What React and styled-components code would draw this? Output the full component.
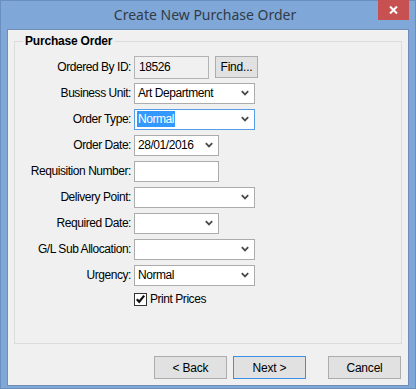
import { Fragment } from 'react';
import styled, { createGlobalStyle } from 'styled-components';

const GlobalStyle = createGlobalStyle`
  html, body { margin: 0; padding: 0; background: #ffffff; }
  * { box-sizing: border-box; }
`

const fields = [
    { label: 'Business Unit:', kind: 'combo', value: 'Art Department', wide: true },
    { label: 'Order Type:', kind: 'combo', value: 'Normal', wide: true, focused: true },
    { label: 'Order Date:', kind: 'combo', value: '28/01/2016' },
    { label: 'Requisition Number:', kind: 'text', value: '' },
    { label: 'Delivery Point:', kind: 'combo', value: '', wide: true },
    { label: 'Required Date:', kind: 'combo', value: '' },
    { label: 'G/L Sub Allocation:', kind: 'combo', value: '', wide: true },
    { label: 'Urgency:', kind: 'combo', value: 'Normal', wide: true },
]

function Chevron() {
    return (
        <ChevronIcon width="8" height="6" viewBox="0 0 8 6">
            <path d="M0.8 1.2 L4 4.4 L7.2 1.2" fill="none" stroke="#4a4a4a" strokeWidth="1.8" />
        </ChevronIcon>
    )
}

function Combo({ value, wide, focused }) {
    return (
        <ComboBox $wide={wide} $focused={focused}>
            <ComboText $selected={focused}>{value}</ComboText>
            <Chevron />
        </ComboBox>
    )
}

export default function App() {
    return (
        <>
            <GlobalStyle />
            <Window>
                <TitleBar>
                    <span />
                    <Title>Create New Purchase Order</Title>
                    <CloseButton type="button">
                        <svg width="9" height="8" viewBox="0 0 9 8">
                            <path d="M1 0.5 L8 7.5 M8 0.5 L1 7.5" stroke="#ffffff" strokeWidth="2" />
                        </svg>
                    </CloseButton>
                </TitleBar>
                <Client>
                    <GroupBox>
                        <Legend>Purchase Order</Legend>
                        <Form>
                            <Label>Ordered By ID:</Label>
                            <IdRow>
                                <ReadOnlyField>18526</ReadOnlyField>
                                <Button type="button" $small>Find...</Button>
                            </IdRow>
                            {fields.map(f => (
                                <Fragment key={f.label}>
                                    <Label>{f.label}</Label>
                                    {f.kind === 'combo'
                                        ? <Combo value={f.value} wide={f.wide} focused={f.focused} />
                                        : <TextField />}
                                </Fragment>
                            ))}
                            <span />
                            <CheckRow>
                                <CheckBox>
                                    <svg width="11" height="11" viewBox="0 0 11 11">
                                        <path d="M1.8 5.2 L4.2 7.8 L9.2 1.6" fill="none" stroke="#111111" strokeWidth="2.2" />
                                    </svg>
                                </CheckBox>
                                Print Prices
                            </CheckRow>
                        </Form>
                    </GroupBox>
                    <ButtonBar>
                        <Button type="button">&lt; Back</Button>
                        <Button type="button" $default>Next &gt;</Button>
                        <Button type="button" $apart>Cancel</Button>
                    </ButtonBar>
                </Client>
            </Window>
        </>
    );
}

const Window = styled.div`
  width: 416px;
  height: 389px;
  display: flex;
  flex-direction: column;
  background: #7fa7d8;
  border: 1px solid #6b8fbc;
  font-family: 'Liberation Sans', Arial, sans-serif;
  font-size: 12px;
  letter-spacing: -0.45px;
  color: #000000;
`
const TitleBar = styled.div`
  height: 29px;
  display: grid;
  grid-template-columns: 1fr auto 1fr;
  align-items: start;
  padding-right: 6px;
`
const Title = styled.div`
  font-family: 'Noto Sans', 'Open Sans', sans-serif;
  font-size: 14px;
  letter-spacing: 0;
  line-height: 28px;
  color: #333b46;
`
const CloseButton = styled.button`
  justify-self: end;
  width: 31px;
  height: 20px;
  margin-top: -1px;
  border: none;
  padding: 0;
  background: #c75050;
  display: flex;
  align-items: center;
  justify-content: center;
`
const Client = styled.div`
  flex: 1;
  margin: 0 6px 6px 6px;
  background: #f0f0f0;
  border: 1px solid #6f8fba;
  display: flex;
  flex-direction: column;
  padding: 0 6px 6px 6px;
`
const GroupBox = styled.fieldset`
  margin: 4px 0 0 0;
  padding: 0 0 29px 0;
  border: 1px solid #dcdcdc;
  min-width: 0;
`
const Legend = styled.legend`
  margin-left: 8px;
  padding: 0 2px;
  font-weight: bold;
  font-size: 12px;
  letter-spacing: -0.2px;
  line-height: 14px;
`
const Form = styled.div`
  display: grid;
  grid-template-columns: 116px 1fr;
  grid-auto-rows: 26px;
  column-gap: 3px;
  align-items: center;
  padding-top: 6px;
`
const Label = styled.div`
  text-align: right;
  white-space: nowrap;
`
const IdRow = styled.div`
  display: flex;
  align-items: center;
  gap: 6px;
`
const ReadOnlyField = styled.div`
  width: 75px;
  height: 23px;
  border: 1px solid #b4b4b4;
  background: #f0f0f0;
  display: flex;
  align-items: center;
  padding-left: 4px;
`
const TextField = styled.div`
  width: 85px;
  height: 21px;
  border: 1px solid #acacac;
  background: #ffffff;
`
const ComboBox = styled.div`
  width: ${p => (p.$wide ? '121px' : '85px')};
  height: 21px;
  border: 1px solid ${p => (p.$focused ? '#569de5' : '#acacac')};
  background: #ffffff;
  display: flex;
  align-items: center;
  padding: 0 5px 0 2px;
`
const ComboText = styled.span`
  flex: 0 0 auto;
  padding: 1px 1px;
  background: ${p => (p.$selected ? '#3399ff' : 'transparent')};
  color: ${p => (p.$selected ? '#ffffff' : '#000000')};
`
const ChevronIcon = styled.svg`
  margin-left: auto;
  flex: none;
`
const CheckRow = styled.label`
  display: flex;
  align-items: center;
  gap: 3px;
  height: 20px;
  align-self: start;
  margin-top: 1px;
`
const CheckBox = styled.span`
  width: 13px;
  height: 13px;
  border: 1px solid #333333;
  background: #ffffff;
  display: flex;
  align-items: center;
  justify-content: center;
`
const ButtonBar = styled.div`
  display: flex;
  justify-content: flex-end;
  gap: 6px;
  margin-top: 12px;
  padding-right: 1px;
`
const Button = styled.button`
  width: ${p => (p.$small ? '43px' : '73px')};
  height: ${p => (p.$small ? '22px' : '23px')};
  margin-left: ${p => (p.$apart ? '16px' : '0')};
  border: 1px solid ${p => (p.$default ? '#3c8fe6' : '#adadad')};
  background: #e1e1e1;
  font-family: 'Liberation Sans', Arial, sans-serif;
  font-size: 12px;
  letter-spacing: -0.2px;
  color: #000000;
  padding: 0;
`
